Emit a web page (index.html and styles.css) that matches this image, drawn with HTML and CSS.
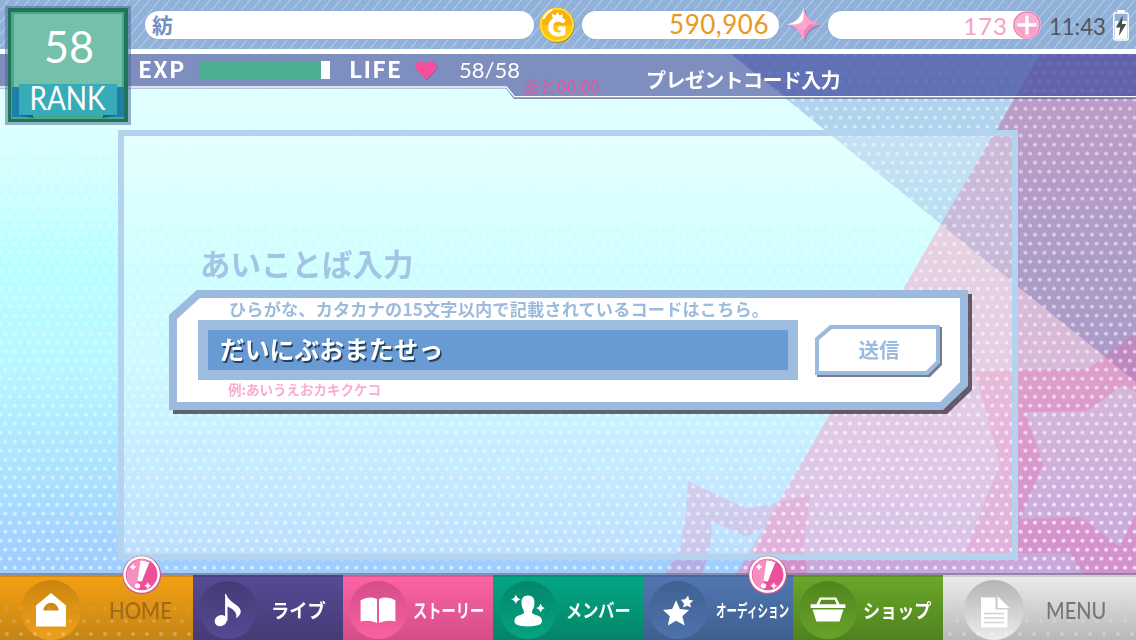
FILE: index.html
```html
<!DOCTYPE html>
<html lang="ja">
<head>
  <meta charset="UTF-8">
  <meta name="viewport" content="width=device-width, initial-scale=1">
  <title>プレゼントコード入力</title>
  <link rel="stylesheet" href="styles.css">
</head>
<body>
  <div class="screen">
    <!-- Background art -->
    <svg class="backdrop" viewBox="0 0 1136 640" width="1136" height="640">
      <defs>
        <linearGradient id="sky" x1="0" y1="0" x2="0" y2="1">
          <stop offset="0.08" stop-color="#e6ffff"/>
          <stop offset="0.2" stop-color="#dcffff"/>
          <stop offset="0.42" stop-color="#b8ffff"/>
          <stop offset="0.56" stop-color="#b8f8ff"/>
          <stop offset="0.75" stop-color="#abe0ff"/>
          <stop offset="0.9" stop-color="#9dccff"/>
        </linearGradient>
        <linearGradient id="pink" x1="0" y1="0" x2="0" y2="1">
          <stop offset="0.1" stop-color="#f787b4"/>
          <stop offset="0.5" stop-color="#f586b6"/>
          <stop offset="1" stop-color="#e988c2"/>
        </linearGradient>
        <linearGradient id="dotFade" x1="0" y1="0" x2="0" y2="1">
          <stop offset="0" stop-color="#fff" stop-opacity="0.25"/>
          <stop offset="0.5" stop-color="#fff" stop-opacity="0.35"/>
          <stop offset="0.85" stop-color="#fff" stop-opacity="0.6"/>
        </linearGradient>
        <pattern id="dots" width="9.490" height="18" patternUnits="userSpaceOnUse" x="0.550" y="5.200">
          <circle cx="4.750" cy="4.500" r="2" fill="#fff"/>
          <circle cx="0" cy="13.500" r="2" fill="#fff"/>
          <circle cx="9.490" cy="13.500" r="2" fill="#fff"/>
        </pattern>
        <mask id="dotMask">
          <rect width="1136" height="640" fill="url(#dotFade)"/>
          <path d="M664 0 H1136 V575 H736 L907 281 L940 223 Z" fill="#fff" fill-opacity="0.3"/>
        </mask>
      </defs>
      <rect width="1136" height="640" fill="url(#sky)"/>
      <polygon points="1072,0 1136,0 1136,575 736,575" fill="url(#pink)" fill-opacity="0.55"/>
      <polygon class="shade" points="664,0 1136,0 1136,382" fill="#cbd3ee"/>
      <g fill="#f25aa6" fill-opacity="0.28">
        <path d="M975 371 L1088 369 L1136 333 V392 L1123 385 L1087 411 L1025 412 L1043 464 L1020 519 L1080 517 L1120 547 L1136 512 V575 H1083 L1070 553 L965 553 L1000 464 Z"/>
        <path d="M688 481 L747 509 L810 495 L803 550 L808 575 H745 L768 524 L747 537 L712 521 L710 548 L702 575 H665 L680 548 L686 515 Z"/>
      </g>
      <rect width="1136" height="640" fill="url(#dots)" mask="url(#dotMask)"/>
    </svg>

    <header class="top-bar">
      <div class="pill pill-name">紡</div>
      <svg class="coin" viewBox="0 0 36 36" width="36" height="36">
        <circle cx="18.600" cy="19" r="17" fill="#a78d35"/>
        <circle cx="17.800" cy="17.800" r="17.200" fill="#fbc60c"/>
        <circle cx="17.800" cy="17.800" r="16" fill="none" stroke="#ffdf3a" stroke-width="1.600"/>
        <path d="M3 18 A15 15 0 0 1 33 18 Z" fill="#fab00b"/>
        <path d="M4.500 12 Q7 6 13 3" stroke="#fff" stroke-width="1.800" fill="none"/>
        <text x="18" y="28.500" class="coin-letter" text-anchor="middle">G</text>
        <path d="M14 12 L12.500 6.500 L16.500 8.500 L18.500 5 L20.500 8.500 L24 7 L23 12 Z" fill="#fff"/>
      </svg>
      <div class="pill pill-gold">590,906</div>
      <svg class="gem" viewBox="0 0 36 36" width="36" height="36">
        <path d="M18.800 1.500 Q21.500 15.500 35 18.800 Q21.500 21.800 19 35 Q16 22 2.500 18.800 Q16 15.500 18.800 1.500Z" fill="#7b87bc"/>
        <path d="M17.500 0.500 Q20.500 14.500 34 17.500 Q20.500 20.800 17.800 34 Q14.800 21 1 17.500 Q15 14.500 17.500 0.500Z" fill="#ff9fc9"/>
        <path d="M17.500 0.500 V17.500 H1 Q15 14.500 17.500 0.500Z" fill="#fff"/>
        <path d="M17.800 34 V17.500 H34 Q20.500 20.800 17.800 34Z" fill="#f283b6"/>
        <path d="M10 17.500 Q17 16 18 10 L23 17.500 L18 24 Z" fill="#ffa6cf"/>
      </svg>
      <div class="pill pill-gems">
        <span>173</span>
        <svg viewBox="0 0 28 28" width="28" height="28">
          <circle cx="14" cy="14" r="13" fill="#f9b0d0" stroke="#ee7fb0" stroke-width="1.600"/>
          <path d="M2 15 A12 12 0 0 0 26 15 Z" fill="#f79fc7"/>
          <circle cx="14" cy="14" r="11.600" fill="none" stroke="#fbbddb"/>
          <path d="M14 4.500 V23.500 M4.500 14 H23.500" stroke="#fff" stroke-width="3.400"/>
        </svg>
      </div>
      <span class="clock">11:43</span>
      <svg class="battery" viewBox="0 0 16 31" width="16" height="31">
        <rect x="4.500" y="0" width="7" height="3" fill="#fff"/>
        <rect x="0.800" y="3" width="14.400" height="27" rx="1.500" fill="#93b2d9" stroke="#fff" stroke-width="1.400"/>
        <rect x="2" y="11" width="12" height="18" fill="#fff"/>
        <path d="M9.600 5.500 L2.800 17.500 H7.200 L5.800 26 L13.300 14 H9 Z" fill="#4c4c4c"/>
      </svg>
    </header>

    <div class="status-bar">
      <svg class="status-shape" viewBox="0 0 1136 46" width="1136" height="46">
        <path d="M0 0 H1136 V45 H514 L506 34.500 H0 Z" fill="#49549e" fill-opacity="0.66"/>
        <path d="M731 0 H1136 V42 H785 Z" fill="#4351ac" fill-opacity="0.3"/>
        <path d="M0 33 H506.500 L514.500 42.700 H1136" fill="none" stroke="#fff" stroke-width="1.300"/>
      </svg>
      <span class="stat exp">EXP</span>
      <div class="exp-bar"><div class="exp-fill" style="width: 93%"></div></div>
      <span class="stat life">LIFE</span>
      <svg class="heart" viewBox="0 0 23 20" width="23" height="20">
        <path d="M12 19.500 L2 9.500 C-1 5 3 0.500 7 1.200 C9.500 1.600 11 2 12 3.500 C13 2 15 1.300 17 1.300 C22 1.300 24 6 21.500 9.500 Z" fill="#6d76ad"/>
        <path d="M11 18.500 L1.300 9 C-1.500 4.500 2 0.300 6 0.500 C8.500 0.700 10 1 11 2.500 C12 1 14 0.500 16 0.500 C21 0.500 23 5 20.700 9 Z" fill="#f4509c"/>
      </svg>
      <span class="life-count">58/58</span>
      <span class="life-timer">あと00:00</span>
      <h1>プレゼントコード入力</h1>
    </div>

    <!-- Player rank, hangs over both bars -->
    <svg class="rank" viewBox="0 0 126 120" width="126" height="120">
      <rect width="126" height="119" fill="#3b6a8c" fill-opacity="0.5"/>
      <rect x="3" y="2" width="120" height="114" fill="#23735a"/>
      <rect x="6" y="6" width="113" height="107" fill="#47a88b"/>
      <rect x="9" y="8" width="108" height="78" fill="#74c0ab"/>
      <rect x="7" y="81" width="112" height="30" fill="#1c80a8"/>
      <rect x="28" y="107" width="70" height="6" fill="#47a88b"/>
      <path d="M14 109 L28 112 V109 Z M112 109 L98 112 V109 Z" fill="#136489"/>
      <rect x="14" y="78" width="98" height="31" fill="#36acb8"/>
      <text x="39" y="57" class="rank-num" textLength="50" lengthAdjust="spacingAndGlyphs">58</text>
      <text x="24.500" y="104" class="rank-word" textLength="76" lengthAdjust="spacingAndGlyphs">RANK</text>
    </svg>

    <main class="panel">
      <h2>あいことば入力</h2>
      <div class="form-shadow">
        <div class="form-edge">
          <form class="form-body">
            <div class="field">
              <p class="hint">ひらがな、カタカナの15文字以内で記載されているコードはこちら。</p>
              <div class="code-input">だいにぶおまたせっ</div>
              <p class="sample">例:あいうえおカキクケコ</p>
            </div>
            <div class="send-shadow">
              <div class="send-edge"><button type="button">送信</button></div>
            </div>
          </form>
        </div>
      </div>
    </main>

    <nav>
      <a class="tab home" href="#">
        <svg class="icon" viewBox="0 0 60 60"><path d="M30 13 L45 25.500 V46.500 H15 V25.500 Z" fill="#fff"/><path d="M22.500 30.500 A7.500 7.800 0 0 1 37.500 30.500 Z" fill="#d08a12"/></svg>
        <span class="latin">HOME</span>
      </a>
      <a class="tab live" href="#">
        <svg class="icon" viewBox="0 0 60 60"><ellipse cx="22.500" cy="41" rx="6.500" ry="5.500" transform="rotate(-25 22.500 41)" fill="#fff"/><path d="M27 13.500 H28 Q30 19 36 23 Q49 31 38.500 38.500 Q40 31 29.500 26.500 V41 H27 Z" fill="#fff"/></svg>
        <span>ライブ</span>
      </a>
      <a class="tab story" href="#">
        <svg class="icon" viewBox="0 0 60 60"><path d="M12 20 Q20 15 29 18.500 V43.500 Q20 39.500 12 42 Z M31 18.500 Q40 15 48 20 V42 Q40 39.500 31 43.500 Z" fill="#fff"/></svg>
        <span>ストーリー</span>
      </a>
      <a class="tab member" href="#">
        <svg class="icon" viewBox="0 0 60 60"><path d="M30 15 C36 15 37.500 20 36.500 25 C36 29 34 30 34 33 C38 36 45 35 44.500 42 Q44 47 30 47 Q16 47 16 42 C15.500 35 22 36 26 33 C26 30 24 29 23.500 25 C22.500 20 24 15 30 15 Z M17.500 14 Q18.500 18 22.500 19 Q18.500 20 17.500 24 Q16.500 20 12.500 19 Q16.500 18 17.500 14 Z M43 23.500 Q44 27 47.500 28 Q44 29 43 32.500 Q42 29 38.500 28 Q42 27 43 23.500 Z" fill="#fff"/></svg>
        <span>メンバー</span>
      </a>
      <a class="tab audition" href="#">
        <svg class="icon" viewBox="0 0 60 60"><path d="M28 20 L32 29 L41.500 30 L34.500 36.500 L37 46 L28 41 L19.500 46 L21.500 36.500 L14.500 30 L24 29 Z M40.500 15 L41.500 19.500 L46 20.500 L42.500 23 L43.500 27.500 L39.500 25.500 L35.500 27.500 L36 23 L33 19.500 L37.500 19 Z" fill="#fff"/></svg>
        <span>オーディション</span>
      </a>
      <a class="tab shop" href="#">
        <svg class="icon" viewBox="0 0 60 60"><path d="M12 24 H18 L21.500 17 H38.500 L42 24 H48 V28 H12 Z M23 19.500 L21 24 H39 L37 19.500 Z" fill="#fff" fill-rule="evenodd"/><path d="M14 29.500 H46 L42 42 H18 Z" fill="#fff"/></svg>
        <span>ショップ</span>
      </a>
      <a class="tab menu" href="#">
        <svg class="icon" viewBox="0 0 60 60"><path d="M17 17.500 H31.500 V29.500 H43.500 V47.500 H17 Z M33.500 16 L45.500 28 H33.500 Z" fill="#fff"/><path d="M20 33.500 H40 M20 38 H40 M20 42.500 H40" stroke="#d0d0d0" stroke-width="1.500"/></svg>
        <span class="latin">MENU</span>
      </a>
    </nav>

    <svg class="alert alert-home" viewBox="0 0 40 40" width="40" height="40">
      <g id="alertMark">
        <circle cx="19.800" cy="20" r="19.300" fill="#c75a8d"/>
        <circle cx="19.600" cy="19.500" r="18.300" fill="#fff"/>
        <circle cx="19.600" cy="19.500" r="15.800" fill="#ee4f9b"/>
        <path d="M25 4.700 L13 33.800 A15.800 15.800 0 0 1 25 4.700 Z" fill="#f58fbf"/>
        <path d="M18.500 5.500 L27.500 7 L19.800 26.500 L15.500 26 Z" fill="#fff"/>
        <circle cx="15.500" cy="30.800" r="2.600" fill="#fff"/>
        <path d="M11 9 Q11.500 11.500 14 12 Q11.500 12.500 11 15 Q10.500 12.500 8 12 Q10.500 11.500 11 9 Z M25.700 27.700 Q26.200 30.200 28.700 30.700 Q26.200 31.200 25.700 33.700 Q25.200 31.200 22.700 30.700 Q25.200 30.200 25.700 27.700 Z" fill="#fff" stroke="#fff" stroke-width="0.500"/>
      </g>
    </svg>
    <svg class="alert alert-audition" viewBox="0 0 40 40" width="40" height="40">
      <use href="#alertMark"/>
    </svg>
  </div>
</body>
</html>
```
FILE: styles.css
```css
/* Reset default styles */
* {
  margin: 0;
  padding: 0;
  box-sizing: border-box;
}

body {
  font-family: "Noto Sans CJK JP", sans-serif;
  overflow: hidden;
}

svg {
  display: block;
  flex-shrink: 0;
}

.screen {
  position: relative;
  display: flex;
  flex-direction: column;
  width: 1136px;
  height: 640px;
  overflow: hidden;
}

.backdrop {
  position: absolute;
  top: 0;
  left: 0;
}

.shade {
  mix-blend-mode: multiply;
}

/* Top bar */
.top-bar {
  position: relative;
  display: flex;
  align-items: center;
  height: 54px;
  padding: 1px 7px 0 145px;
  border-bottom: 5px solid #fff;
  background: repeating-linear-gradient(130deg, #92b1d8 0, #92b1d8 6px, #abc6e6 6.500px, #abc6e6 7.300px, #92b1d8 7.700px);
}

.pill {
  display: flex;
  align-items: center;
  height: 28px;
  border-radius: 14px;
  background: #fff;
  box-shadow: 0 0 1px 1px rgba(135, 175, 220, 0.5);
}

.pill-name {
  width: 389px;
  padding-left: 7px;
  padding-bottom: 2px;
  color: #6f8fc6;
  font-size: 21px;
  font-weight: 700;
}

.coin {
  margin: 0 7px 1px 5px;
}

.coin-letter {
  fill: #fff;
  stroke: #fff;
  font-family: Lato, sans-serif;
  font-size: 25px;
  font-weight: 900;
}

.pill-gold {
  width: 197px;
  justify-content: flex-end;
  margin-bottom: 1px;
  padding-right: 10px;
  padding-bottom: 1px;
  color: #e89a1c;
  font-family: Lato, sans-serif;
  font-size: 26px;
  letter-spacing: 0.500px;
}

.gem {
  margin: 0 6px 1px 7px;
}

.pill-gems {
  width: 213px;
  justify-content: flex-end;
  gap: 5px;
  color: #f9a0c8;
  font-family: Lato, sans-serif;
  font-size: 24px;
  letter-spacing: 1px;
}

.clock {
  margin: 0 0 0 8px;
  width: 64px;
  color: #505560;
  font-family: Lato, sans-serif;
  font-size: 24px;
  transform: scaleX(0.92);
  transform-origin: 0 50%;
}

/* EXP / LIFE strip */
.status-bar {
  position: relative;
  display: flex;
  align-items: flex-start;
  height: 46px;
  padding: 7px 0 0 138px;
  color: #fff;
  white-space: nowrap;
}

.status-shape {
  position: absolute;
  top: 0;
  left: 0;
}

.status-bar > :not(.status-shape) {
  position: relative;
}

.stat {
  margin-top: -2px;
  font-size: 23px;
  font-weight: 700;
  line-height: 18px;
  letter-spacing: 1.200px;
}

.exp {
  width: 61px;
}

.exp-bar {
  width: 131px;
  height: 18px;
  background: #fff;
}

.exp-fill {
  height: 100%;
  background: #4eae92;
}

.life {
  width: 66px;
  margin-left: 19px;
}

.life-count {
  width: 64px;
  margin-left: 21px;
  font-family: Lato, sans-serif;
  font-size: 22px;
  line-height: 18px;
}

.life-timer {
  width: 123px;
  margin-top: 15px;
  color: #e555a3;
  font-size: 17px;
  line-height: 20px;
}

.status-bar h1 {
  margin-top: 8px;
  font-size: 20px;
  font-weight: 700;
  line-height: 22px;
  letter-spacing: -0.600px;
}

/* Rank badge */
.rank {
  position: absolute;
  top: 6px;
  left: 5px;
}

.rank-num,
.rank-word {
  fill: #fff;
  font-family: Lato, sans-serif;
}

.rank-num {
  font-size: 44px;
}

.rank-word {
  font-size: 32px;
}

/* Content panel */
.panel {
  position: relative;
  width: 900px;
  height: 430px;
  margin: 30px 0 0 118px;
  padding: 107px 0 0 45px;
  border: 6px solid #b4d3ee;
  background: rgba(255, 255, 255, 0.3);
  background-clip: padding-box;
}

.panel h2 {
  margin-left: 31px;
  color: #a4c4e6;
  font-size: 30.500px;
  font-weight: 700;
  line-height: 40px;
}

.form-shadow {
  margin-top: 7px;
  filter: drop-shadow(4px 4px 0 rgba(50, 40, 50, 0.7));
}

.form-edge {
  width: 799px;
  height: 120px;
  padding: 8px;
  background: #9bbade;
  clip-path: polygon(28px 0, 100% 0, 100% 96px, 774px 100%, 0 100%, 0 25px);
}

.form-body {
  display: flex;
  height: 104px;
  padding-left: 21px;
  background: #fff;
  clip-path: polygon(23px 0, 100% 0, 100% 84px, 763px 100%, 0 100%, 0 21px);
}

.field {
  width: 600px;
}

.hint {
  height: 22px;
  padding-left: 31px;
  color: #9cbbdc;
  font-size: 17.200px;
  font-weight: 700;
  line-height: 22px;
  letter-spacing: 0.150px;
  white-space: nowrap;
}

.code-input {
  height: 60px;
  padding-left: 12px;
  border: 10px solid #9dbce0;
  background: #689bd4;
  color: #fff;
  font-size: 24.800px;
  font-weight: 700;
  line-height: 37px;
  text-shadow: 1.500px 1.500px 0 #24405f;
}

.sample {
  padding-left: 30px;
  color: #f8acd2;
  font-size: 13.500px;
  font-weight: 700;
  line-height: 19px;
}

.send-shadow {
  margin: 27px 0 0 17px;
  filter: drop-shadow(2px 2px 0 #727c86);
}

.send-edge {
  width: 125px;
  height: 50px;
  padding: 4px;
  background: #9bbade;
  clip-path: polygon(15px 0, 100% 0, 100% 38px, 113px 100%, 0 100%, 0 13px);
}

.send-edge button {
  width: 117px;
  height: 42px;
  padding: 0 0 3px 3px;
  border: none;
  background: #fff;
  color: #9bbade;
  font-family: inherit;
  font-size: 20.500px;
  font-weight: 700;
  clip-path: polygon(13px 0, 100% 0, 100% 32px, 107px 100%, 0 100%, 0 11px);
}

/* Bottom navigation */
nav {
  position: relative;
  display: flex;
  height: 67px;
  margin-top: 13px;
  border-top: 2px solid rgba(120, 120, 140, 0.7);
}

.tab {
  position: relative;
  display: flex;
  align-items: center;
  width: 150px;
  padding: 4px 0 0 6px;
  color: #fff;
  font-size: 19px;
  font-weight: 700;
  text-decoration: none;
  white-space: nowrap;
  box-shadow: inset 0 2px 0 rgba(0, 0, 0, 0.12);
}

.tab span {
  line-height: 24px;
  transform-origin: 0 50%;
}

.icon {
  width: 58px;
  height: 58px;
  margin-right: 1px;
  border-radius: 50%;
}

.tab .latin {
  font-family: Lato, sans-serif;
  font-size: 23px;
  font-weight: 500;
}

/* Dot texture on the two outer tabs */
.home::before,
.menu::before {
  content: "";
  position: absolute;
  inset: 20px 0 0;
  background-image: radial-gradient(circle, #fff 1.500px, transparent 2.300px), radial-gradient(circle, #fff 1.500px, transparent 2.300px);
  background-size: 14px 26px;
  background-position: 0 0, 7px 13px;
  opacity: 0.3;
  mask-image: linear-gradient(transparent, #000);
}

.home .icon,
.menu .icon {
  width: 60px;
  height: 60px;
  margin-right: 0;
}

.home {
  width: 193px;
  padding-left: 21px;
  background: linear-gradient(#f6a012, #c48517);
}

.home .icon {
  background: linear-gradient(#c98510, rgba(245, 163, 28, 0.85));
}

.home span {
  margin-left: 28px;
  color: #a06a1a;
  transform: scaleX(0.89);
}

.live {
  background: linear-gradient(#564b96, #453b75);
}

.live .icon {
  background: linear-gradient(#453b75, #544994);
}

.live span {
  margin-left: 13px;
  transform: scaleX(0.96);
}

.story {
  background: linear-gradient(#ff63a6, #d34d88);
}

.story .icon {
  background: linear-gradient(#d34d88, #fb60a3);
}

.story span {
  margin-left: 5px;
  transform: scaleX(0.75);
}

.member {
  background: linear-gradient(#03a885, #048468);
}

.member .icon {
  background: linear-gradient(#04866a, #04a381);
}

.member span {
  margin-left: 8px;
  transform: scaleX(0.85);
}

.audition {
  background: linear-gradient(#5177b3, #3f608f);
}

.audition .icon {
  background: linear-gradient(#406191, #4d72ad);
}

.audition span {
  margin-left: 8px;
  font-size: 17px;
  transform: scaleX(0.620);
}

.shop {
  background: linear-gradient(#6ba82a, #4f821e);
}

.shop .icon {
  background: linear-gradient(#50851e, #68a329);
}

.shop span {
  margin-left: 5px;
  transform: scaleX(0.9);
}

.menu {
  width: 193px;
  padding-left: 21px;
  background: linear-gradient(#ececec, #b8b8b8);
}

.menu .icon {
  background: linear-gradient(#b4b4b4, #ececec);
}

.menu span {
  margin-left: 22px;
  color: #777;
  transform: scaleX(0.87);
}

/* Notification marks over the tabs */
.alert {
  position: absolute;
  top: 555px;
}

.alert-home {
  left: 122px;
}

.alert-audition {
  left: 748px;
}
```
